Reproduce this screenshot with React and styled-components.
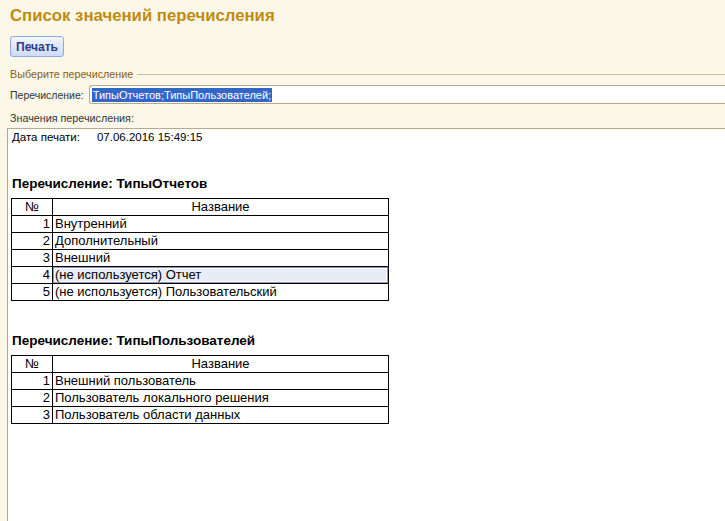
import React from "react";
import styled, { createGlobalStyle } from "styled-components";

const GlobalStyle = createGlobalStyle`
  html, body {
    margin: 0;
    padding: 0;
    background: #fbf8e9;
    font-family: Arial, "Liberation Sans", sans-serif;
    overflow: hidden;
  }
`;

const Page = styled.div`
  width: 725px;
  height: 521px;
  display: flex;
  flex-direction: column;
  overflow: hidden;
`;

const Title = styled.h1`
  margin: 6px 0 0 10px;
  font-size: 16.75px;
  line-height: 20px;
  font-weight: bold;
  color: #c08b0e;
`;

const Toolbar = styled.div`
  display: flex;
  padding: 10px 0 0 10px;
`;

const Button = styled.button`
  height: 21px;
  padding: 0 5px;
  border: 1px solid #8ea9e0;
  border-radius: 3px;
  background: linear-gradient(#f1f5fe, #cddcf8);
  color: #2b3c8c;
  font-family: Arial, "Liberation Sans", sans-serif;
  font-size: 12px;
  font-weight: bold;
`;

const Group = styled.div`
  display: flex;
  align-items: center;
  margin: 10px 0 0 10px;
  height: 14px;
  gap: 4px;
`;

const GroupTitle = styled.span`
  font-size: 10.75px;
  color: #8a5e10;
  white-space: nowrap;
`;

const GroupLine = styled.div`
  flex: 1;
  height: 1px;
  margin-top: 1px;
  background: #c9bd93;
`;

const Field = styled.div`
  display: flex;
  align-items: center;
  margin: 4px 0 0 10px;
  height: 19px;
  gap: 5px;
`;

const Label = styled.span`
  font-size: 10.5px;
  color: #333;
  white-space: nowrap;
`;

const Input = styled.div`
  flex: 1;
  height: 17px;
  border: 1px solid #b5ab88;
  border-right: none;
  border-radius: 3px 0 0 3px;
  background: #fff;
  display: flex;
  align-items: center;
  padding-left: 2px;
`;

const Selected = styled.span`
  background: #3367c7;
  color: #fff;
  font-size: 11px;
  line-height: 14px;
  padding: 0 1px;
`;

const Caption = styled.div`
  margin: 7px 0 0 10px;
  font-size: 10.75px;
  line-height: 14px;
  color: #333;
`;

const Sheet = styled.div`
  flex: 1;
  margin: 3px 0 0 7px;
  background: #fff;
  border-top: 1px solid #b5ab88;
  border-left: 1px solid #b5ab88;
  padding: 2px 0 0 4px;
  font-size: 11.5px;
  color: #000;
`;

const DateRow = styled.div`
  display: flex;
  gap: 17px;
  line-height: 13px;
`;

const Heading = styled.div`
  margin-top: ${(p) => p.$top}px;
  font-size: 13.5px;
  font-weight: bold;
  line-height: 15px;
`;

const Table = styled.table`
  margin: 7px 0 0 -1px;
  border-collapse: collapse;
  width: 378px;
  font-size: 13px;
`;

const Cell = styled.td`
  border: 1px solid #000;
  height: 16px;
  padding: 0 2px;
  line-height: 16px;
  text-align: ${(p) => p.$align || "left"};
  white-space: nowrap;
`;

const NumCell = styled(Cell)`
  width: 36px;
`;

const MarkedCell = styled(Cell)`
  background: #e8ecf6;
  box-shadow: inset 0 0 0 1px #8f95b3, inset 0 0 0 2px #fff;
`;

function EnumTable({ rows, marked }) {
  return (
    <Table>
      <tbody>
        <tr>
          <NumCell $align="center">№</NumCell>
          <Cell $align="center">Название</Cell>
        </tr>
        {rows.map((name, i) => {
          const NameCell = marked === i ? MarkedCell : Cell;
          return (
            <tr key={i}>
              <NumCell $align="right">{i + 1}</NumCell>
              <NameCell>{name}</NameCell>
            </tr>
          );
        })}
      </tbody>
    </Table>
  );
}

export default function App() {
  return (
    <Page>
      <GlobalStyle />
      <Title>Список значений перечисления</Title>
      <Toolbar>
        <Button>Печать</Button>
      </Toolbar>
      <Group>
        <GroupTitle>Выберите перечисление</GroupTitle>
        <GroupLine />
      </Group>
      <Field>
        <Label>Перечисление:</Label>
        <Input>
          <Selected>ТипыОтчетов;ТипыПользователей;</Selected>
        </Input>
      </Field>
      <Caption>Значения перечисления:</Caption>
      <Sheet>
        <DateRow>
          <span>Дата печати:</span>
          <span>07.06.2016 15:49:15</span>
        </DateRow>
        <Heading $top={32}>Перечисление: ТипыОтчетов</Heading>
        <EnumTable
          rows={[
            "Внутренний",
            "Дополнительный",
            "Внешний",
            "(не используется) Отчет",
            "(не используется) Пользовательский",
          ]}
          marked={3}
        />
        <Heading $top={32}>Перечисление: ТипыПользователей</Heading>
        <EnumTable
          rows={[
            "Внешний пользователь",
            "Пользователь локального решения",
            "Пользователь области данных",
          ]}
        />
      </Sheet>
    </Page>
  );
}
